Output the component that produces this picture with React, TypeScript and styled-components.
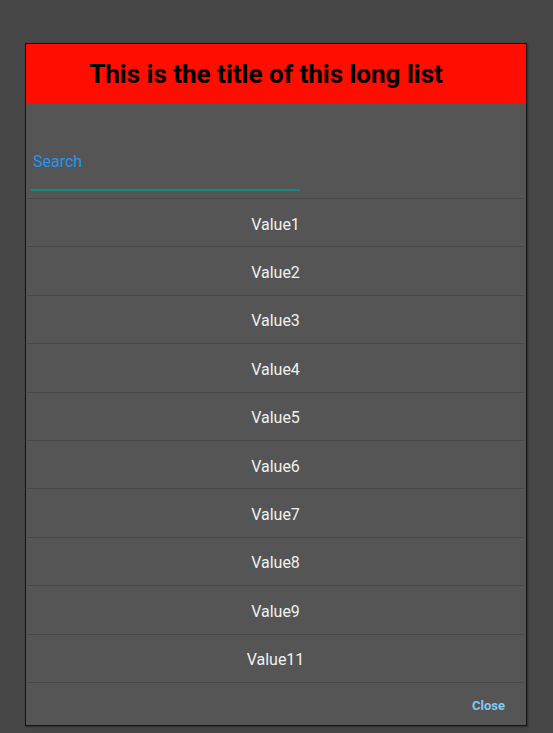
import React from 'react'
import styled, { createGlobalStyle } from 'styled-components'

const VALUES = ['Value1', 'Value2', 'Value3', 'Value4', 'Value5', 'Value6', 'Value7', 'Value8', 'Value9', 'Value11']

const Global = createGlobalStyle`
  html, body { margin: 0; padding: 0; background: #464646; }
  body { font-family: Roboto, "Noto Sans", sans-serif; }
`

const Page = styled.div`
  width: 553px;
  height: 733px;
  box-sizing: border-box;
  padding: 43px 26px 7px 25px;
  display: flex;
  flex-direction: column;
`

const Modal = styled.div`
  flex: 1;
  display: flex;
  flex-direction: column;
  background: #555555;
  border: 1px solid #141414;
  box-shadow: 1px 1px 2px rgba(0, 0, 0, 0.35);
`

const Header = styled.div`
  height: 59px;
  background: #ff0d00;
  display: flex;
  align-items: center;
  justify-content: center;
  padding-right: 20px;
  font-size: 26px;
  font-weight: 700;
  color: #000;
`

const SearchBox = styled.div`
  height: 95px;
  display: flex;
  flex-direction: column;
  justify-content: flex-end;
  padding: 0 0 0 4px;
  border-bottom: 1px solid #484848;
  margin: 0 2px 0 1px;
`

const SearchInput = styled.input`
  width: 267px;
  background: transparent;
  border: none;
  border-bottom: 2px solid #158a85;
  color: #2196f3;
  font-family: inherit;
  font-size: 16px;
  padding: 0 0 18px 2px;
  margin-bottom: 7px;
  outline: none;
  &::placeholder { color: #2196f3; }
`

const List = styled.div`
  display: flex;
  flex-direction: column;
  margin: 0 2px 0 1px;
`

const Row = styled.div`
  box-sizing: border-box;
  height: 48.4px;
  padding-top: 3px;
  display: flex;
  align-items: center;
  justify-content: center;
  border-bottom: 1px solid #484848;
  color: #f0f0f0;
  font-size: 16px;
`

const Footer = styled.div`
  flex: 1;
  display: flex;
  align-items: center;
  justify-content: flex-end;
  padding: 3px 21px 0 0;
`

const CloseButton = styled.button`
  background: none;
  border: none;
  padding: 0;
  color: #85c8f2;
  font-family: inherit;
  font-size: 13px;
  font-weight: 700;
  cursor: pointer;
`

export default function App() {
  return (
    <Page>
      <Global />
      <Modal>
        <Header>This is the title of this long list</Header>
        <SearchBox>
          <SearchInput placeholder="Search" />
        </SearchBox>
        <List>
          {VALUES.map(v => <Row key={v}>{v}</Row>)}
        </List>
        <Footer>
          <CloseButton>Close</CloseButton>
        </Footer>
      </Modal>
    </Page>
  )
}
